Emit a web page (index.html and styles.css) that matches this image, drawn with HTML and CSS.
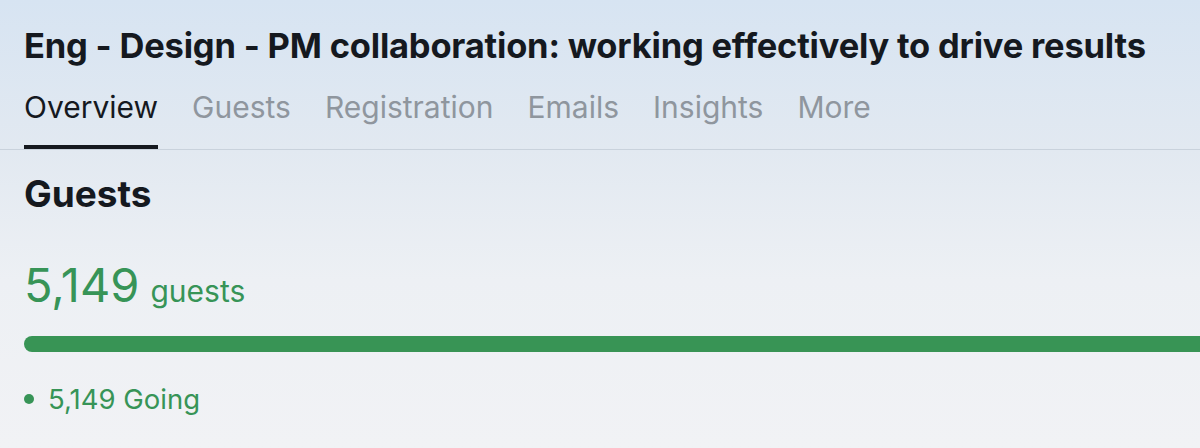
FILE: index.html
```html
<!DOCTYPE html>
<html>
<head>
<meta charset="utf-8">
<link rel="stylesheet" href="styles.css">
</head>
<body>
<div class="page">
  <header class="header">
    <h1 class="title">Eng - Design - PM collaboration: working effectively to drive results</h1>
    <nav class="tabs">
      <a class="tab active">Overview</a>
      <a class="tab">Guests</a>
      <a class="tab">Registration</a>
      <a class="tab">Emails</a>
      <a class="tab">Insights</a>
      <a class="tab">More</a>
    </nav>
  </header>
  <section class="content">
    <h2 class="heading">Guests</h2>
    <div class="count"><span class="num">5,149</span><span class="unit">guests</span></div>
    <div class="bar"></div>
    <div class="legend"><span class="dot"></span><span>5,149 Going</span></div>
  </section>
</div>
</body>
</html>
```

FILE: styles.css
```css
html, body {
  margin: 0;
  padding: 0;
}
body {
  width: 1200px;
  height: 448px;
  overflow: hidden;
  font-family: Inter, "Noto Sans", sans-serif;
  background: linear-gradient(180deg, #d7e4f2 0px, #e2e9f1 150px, #edf0f4 280px, #f1f2f5 448px);
}
.page {
  width: 1200px;
}
.header {
  padding: 0 0 0 24px;
  border-bottom: 1px solid #c9d2dc;
}
.title {
  margin: 0;
  padding-top: 24px;
  font-size: 34.5px;
  line-height: 44px;
  font-weight: 700;
  color: #15191f;
  letter-spacing: -0.2px;
  white-space: nowrap;
}
.tabs {
  display: flex;
  gap: 34px;
  margin-top: 21px;
}
.tab {
  font-size: 30px;
  line-height: 36px;
  color: #8f969e;
  padding-bottom: 20px;
  border-bottom: 4px solid transparent;
}
.tab.active {
  color: #15191f;
  border-bottom-color: #15191f;
}
.content {
  padding: 22px 0 0 24px;
}
.heading {
  margin: 0;
  font-size: 37px;
  line-height: 44px;
  font-weight: 700;
  color: #15191f;
}
.count {
  margin-top: 43px;
  display: flex;
  align-items: baseline;
  gap: 11px;
  color: #379457;
}
.num {
  font-size: 47px;
  line-height: 52px;
}
.unit {
  font-size: 30px;
}
.bar {
  margin-top: 25px;
  height: 16px;
  border-radius: 8px 0 0 8px;
  background: #389455;
}
.legend {
  margin-top: 30px;
  display: flex;
  align-items: center;
  gap: 14px;
  color: #379457;
  font-size: 27.5px;
  line-height: 34px;
}
.dot {
  width: 10px;
  height: 10px;
  border-radius: 50%;
  background: #379457;
}
```
